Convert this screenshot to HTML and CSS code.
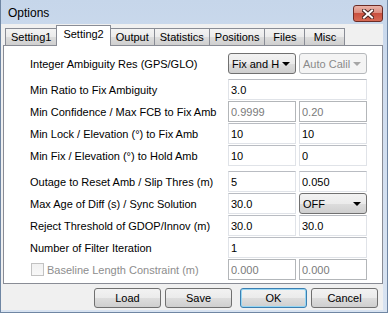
FILE: index.html
```html
<!DOCTYPE html>
<html lang="en">
<head>
    <meta charset="UTF-8">
    <title>Options</title>
    <link rel="stylesheet" href="styles.css">
</head>
<body>
    <div class="window">
        <div class="titlebar">
            <span class="title">Options</span>
            <span class="close">
                <svg width="12" height="10" viewBox="0 0 12 10">
                    <path d="M2 1.5 L10 8.5 M10 1.5 L2 8.5" stroke="#4a2420" stroke-width="4" stroke-linecap="square"/>
                    <path d="M2 1.5 L10 8.5 M10 1.5 L2 8.5" stroke="#fff" stroke-width="2" stroke-linecap="square"/>
                </svg>
            </span>
        </div>
        <div class="client">
            <div class="tabs">
                <div class="tab">Setting1</div>
                <div class="tab active">Setting2</div>
                <div class="tab">Output</div>
                <div class="tab">Statistics</div>
                <div class="tab">Positions</div>
                <div class="tab">Files</div>
                <div class="tab">Misc</div>
            </div>
            <div class="panel">
                <div class="row group-end">
                    <span class="label">Integer Ambiguity Res (GPS/GLO)</span>
                    <div class="fields">
                        <div class="combo">Fix and H<i class="arrow"></i></div>
                        <div class="combo disabled">Auto Calil<i class="arrow"></i></div>
                    </div>
                </div>
                <div class="row">
                    <span class="label">Min Ratio to Fix Ambiguity</span>
                    <div class="fields">
                        <input class="edit wide" type="text" value="3.0">
                    </div>
                </div>
                <div class="row">
                    <span class="label">Min Confidence / Max FCB to Fix Amb</span>
                    <div class="fields">
                        <input class="edit off" type="text" value="0.9999" disabled>
                        <input class="edit off" type="text" value="0.20" disabled>
                    </div>
                </div>
                <div class="row">
                    <span class="label">Min Lock / Elevation (&deg;) to Fix Amb</span>
                    <div class="fields">
                        <input class="edit" type="text" value="10">
                        <input class="edit" type="text" value="10">
                    </div>
                </div>
                <div class="row group-end">
                    <span class="label">Min Fix / Elevation (&deg;) to Hold Amb</span>
                    <div class="fields">
                        <input class="edit" type="text" value="10">
                        <input class="edit" type="text" value="0">
                    </div>
                </div>
                <div class="row">
                    <span class="label">Outage to Reset Amb / Slip Thres (m)</span>
                    <div class="fields">
                        <input class="edit" type="text" value="5">
                        <input class="edit" type="text" value="0.050">
                    </div>
                </div>
                <div class="row">
                    <span class="label">Max Age of Diff (s) / Sync Solution</span>
                    <div class="fields">
                        <input class="edit" type="text" value="30.0">
                        <div class="combo">OFF<i class="arrow"></i></div>
                    </div>
                </div>
                <div class="row">
                    <span class="label">Reject Threshold of GDOP/Innov (m)</span>
                    <div class="fields">
                        <input class="edit" type="text" value="30.0">
                        <input class="edit" type="text" value="30.0">
                    </div>
                </div>
                <div class="row">
                    <span class="label">Number of Filter Iteration</span>
                    <div class="fields">
                        <input class="edit wide" type="text" value="1">
                    </div>
                </div>
                <div class="row">
                    <span class="label check-label"><i class="checkbox"></i>Baseline Length Constraint (m)</span>
                    <div class="fields">
                        <input class="edit off" type="text" value="0.000" disabled>
                        <input class="edit off" type="text" value="0.000" disabled>
                    </div>
                </div>
            </div>
            <div class="buttons">
                <button class="button">Load</button>
                <button class="button">Save</button>
                <button class="button default">OK</button>
                <button class="button">Cancel</button>
            </div>
        </div>
    </div>
</body>
</html>
```

FILE: styles.css
```css
body {
    margin: 0;
    font-family: "Liberation Sans", Arial, sans-serif;
    font-size: 11px;
    color: #000;
}
.window {
    width: 388px;
    height: 313px;
    box-sizing: border-box;
    display: flex;
    flex-direction: column;
    background: linear-gradient(#c6d6ea, #d0ddef 30%, #d8e3f1);
    border: 1px solid #6f86a3;
    border-top: none;
}
.titlebar {
    height: 24px;
    display: flex;
    align-items: flex-start;
    flex-shrink: 0;
}
.title {
    padding: 2px 0 0 7px;
    line-height: 22px;
    font-size: 12px;
}
.close {
    margin: 5px 4px 0 auto;
    width: 28px;
    height: 15px;
    border: 1px solid #6b2c26;
    border-radius: 3px;
    background: linear-gradient(#eab4a9, #dc8d7f 45%, #c9503f 50%, #d76a55);
    display: flex;
    align-items: center;
    justify-content: center;
}
.client {
    flex: 1;
    margin: 0 4px 2px 0;
    background: #f0f0f0;
    display: flex;
    flex-direction: column;
}
.tabs {
    height: 20px;
    margin-top: 1px;
    padding-left: 4px;
    display: flex;
    align-items: flex-end;
}
.tab {
    height: 16px;
    line-height: 16px;
    min-width: 29px;
    padding: 0 5px;
    margin-left: -1px;
    text-align: center;
    border: 1px solid #898c95;
    border-bottom: none;
    background: linear-gradient(#f3f3f3, #ebebeb 50%, #dddddd 50%, #cfcfcf);
}
.tab:first-child {
    margin-left: 0;
}
.tab.active {
    position: relative;
    z-index: 1;
    height: 20px;
    line-height: 16px;
    margin-bottom: -1px;
    padding: 0 6px;
    background: #fff;
}
.panel {
    margin-left: 2px;
    padding: 7px 0 3px 26px;
    border: 1px solid #898c95;
    background: #fff;
    display: flex;
    flex-direction: column;
    gap: 1px;
}
.row {
    height: 21px;
    display: flex;
    align-items: center;
}
.row.group-end {
    margin-bottom: 4px;
}
.label {
    width: 198px;
    flex-shrink: 0;
}
.check-label {
    display: flex;
    align-items: center;
    color: #8d8d8d;
}
.checkbox {
    width: 11px;
    height: 11px;
    margin: 0 3px 0 1px;
    border: 1px solid #c2c2c2;
    background: linear-gradient(#f1f1f1, #f8f8f8);
}
.fields {
    display: flex;
    gap: 3px;
}
.edit {
    width: 68px;
    height: 21px;
    box-sizing: border-box;
    margin: 0;
    padding: 0 2px;
    font: 11px "Liberation Sans", Arial, sans-serif;
    color: #000;
    background: #fff;
    border: 1px solid #e0e3e8;
    border-top-color: #b9bcc2;
    outline: none;
}
.edit.wide {
    width: 139px;
}
.edit.off {
    color: #7a7a7a;
    border-color: #b3b6b9;
}
.combo {
    width: 68px;
    height: 21px;
    box-sizing: border-box;
    padding: 0 3px;
    display: flex;
    align-items: center;
    border: 1px solid #707070;
    border-radius: 3px;
    background: linear-gradient(#f2f2f2, #ebebeb 50%, #dddddd 50%, #cfcfcf);
}
.combo.disabled {
    color: #8a8a8a;
    border-color: #b6b9bc;
    background: #f4f4f4;
}
.arrow {
    margin-left: auto;
    margin-right: 2px;
    width: 0;
    height: 0;
    border-left: 4px solid transparent;
    border-right: 4px solid transparent;
    border-top: 4px solid #000;
}
.combo.disabled .arrow {
    border-top-color: #a6a6a6;
}
.buttons {
    margin-top: 4px;
    padding-left: 93px;
    display: flex;
}
.button {
    width: 67px;
    height: 20px;
    margin-right: 4px;
    padding: 0;
    font: 11px "Liberation Sans", Arial, sans-serif;
    color: #000;
    border: 1px solid #707070;
    border-radius: 3px;
    background: linear-gradient(#f2f2f2, #ebebeb 50%, #dddddd 50%, #cfcfcf);
}
.button:nth-child(2) {
    margin-right: 8px;
}
.button.default {
    border-color: #3c7fb1;
    box-shadow: inset 0 0 0 1px #96d6f3;
}
```
